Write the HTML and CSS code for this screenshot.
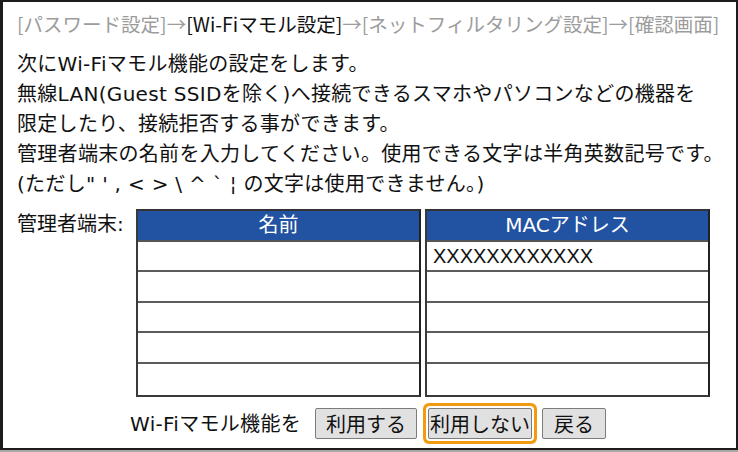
FILE: index.html
```html
<!DOCTYPE html>
<html lang="ja">
<head>
<meta charset="utf-8">
<link rel="stylesheet" href="styles.css">
</head>
<body>
<div class="frame">
  <div class="crumbs"><span class="off">[パスワード設定]→</span><span class="on">[Wi-Fiマモル設定]</span><span class="off">→[ネットフィルタリング設定]→[確認画面]</span></div>
  <div class="desc">
    <div>次にWi-Fiマモル機能の設定をします。</div>
    <div>無線LAN(Guest SSIDを除く)へ接続できるスマホやパソコンなどの機器を</div>
    <div>限定したり、接続拒否する事ができます。</div>
    <div>管理者端末の名前を入力してください。使用できる文字は半角英数記号です。</div>
    <div>(ただし" ' , &lt; &gt; \ ^ ` ¦ の文字は使用できません。)</div>
  </div>
  <div class="devices">
    <div class="label">管理者端末:</div>
    <div class="tbl">
      <div class="th">名前</div>
      <div class="td"></div>
      <div class="td"></div>
      <div class="td"></div>
      <div class="td"></div>
      <div class="td"></div>
    </div>
    <div class="tbl">
      <div class="th">MACアドレス</div>
      <div class="td mac">XXXXXXXXXXXX</div>
      <div class="td"></div>
      <div class="td"></div>
      <div class="td"></div>
      <div class="td"></div>
    </div>
  </div>
  <div class="actions">
    <span class="prompt">Wi-Fiマモル機能を</span>
    <button class="btn btn-use">利用する</button>
    <button class="btn btn-no focus">利用しない</button>
    <button class="btn btn-back">戻る</button>
  </div>
</div>
</body>
</html>
```
FILE: styles.css
```css
html, body {
  margin: 0;
  padding: 0;
  background: #ffffff;
}
body {
  font-family: "DejaVu Sans", "Noto Sans CJK JP", sans-serif;
  color: #111111;
  width: 738px;
  height: 452px;
  overflow: hidden;
}
.frame {
  box-sizing: border-box;
  width: 738px;
  height: 450px;
  border: 2px solid #1c1c1c;
  border-left-width: 3px;
  box-shadow: 0 2px 0 #a8a8a8;
  padding: 7px 0 0 14px;
}
.crumbs {
  font-family: "Noto Sans CJK JP", sans-serif;
  font-size: 19.5px;
  line-height: 30px;
  white-space: nowrap;
}
.crumbs .off { color: #9c9c9c; }
.crumbs .on { color: #111111; }
.desc {
  margin-top: 10px;
  font-size: 20px;
  line-height: 30px;
  white-space: nowrap;
  letter-spacing: 0.3px;
}
.devices {
  display: flex;
  align-items: flex-start;
  margin-top: 10px;
}
.label {
  font-size: 20px;
  line-height: 30px;
  width: 119px;
  white-space: nowrap;
}
.tbl {
  box-sizing: border-box;
  width: 285px;
  display: grid;
  grid-template-rows: 31px 30px 31px 30px 31px 31px;
  border: 2px solid #3a3a3a;
  border-top-color: #333333;
  border-right-color: #222222;
}
.tbl + .tbl { margin-left: 4px; }
.th {
  background: #2252a2;
  color: #ffffff;
  font-size: 20px;
  line-height: 28px;
  text-align: center;
  border-bottom: 2px solid #555555;
}
.td {
  border-bottom: 2px solid #5c5c5c;
}
.td:last-child { border-bottom: none; }
.mac {
  font-family: "Liberation Sans", Arial, sans-serif;
  font-size: 20px;
  line-height: 28px;
  padding-left: 6px;
  color: #111111;
}
.actions {
  display: flex;
  align-items: center;
  margin-top: 11px;
  padding-left: 113px;
}
.prompt {
  font-size: 20px;
  line-height: 30px;
  letter-spacing: 0.3px;
  margin-right: 14px;
  white-space: nowrap;
}
.btn {
  box-sizing: border-box;
  height: 31px;
  padding: 0;
  font-family: "Noto Sans CJK JP", sans-serif;
  font-size: 20px;
  line-height: 27px;
  color: #111111;
  background: #e1e1e1;
  border: 1px solid #7c7c7c;
  border-radius: 2px;
  white-space: nowrap;
}
.btn-use { width: 102px; }
.btn-no { width: 104px; margin-left: 11px; }
.btn-back { width: 64px; margin-left: 10px; }
.focus {
  box-shadow: 0 0 0 2px #ffffff, 0 0 0 5px #f29a12;
}
```
